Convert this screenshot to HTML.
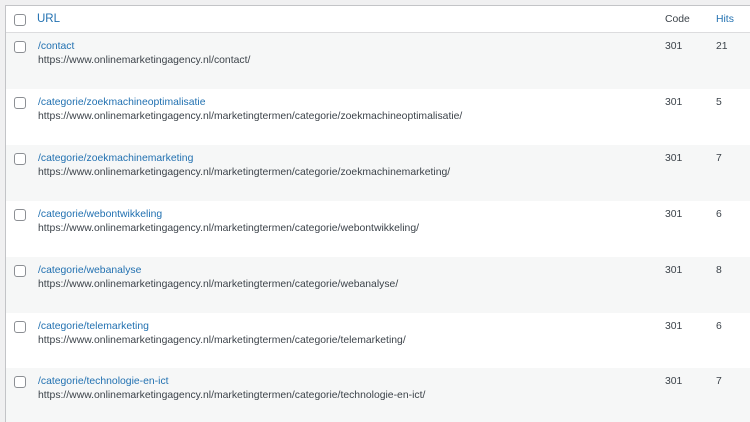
<!DOCTYPE html>
<html><head><style>
html,body{margin:0;width:750px;height:422px;overflow:hidden}
body{background:#f0f0f1;font-family:"Liberation Sans",Arial,sans-serif;font-size:10.4px;color:#3c434a;position:relative}
.t{position:absolute;left:5px;top:5px;width:760px;height:430px;background:#fff;border:1px solid #c3c4c7}
.h{position:absolute;left:0;top:0;right:0;height:26px;border-bottom:1px solid #dcdcde;background:#fff}
.r{position:absolute;left:0;right:0;height:56px}
.g{background:#f6f7f7}
.cb{position:absolute;left:8px;width:10px;height:10px;border:1px solid #8c8f94;border-radius:3px;background:#fff}
.a{color:#2271b1;position:absolute;left:31px}
.u{position:absolute;left:32px}
.c{position:absolute;left:659px}
.hi{position:absolute;left:710px}
</style></head><body>
<div class="t">
<div class="h"><div class="cb" style="top:8px"></div><span class="a" style="top:7px;font-size:11.5px">URL</span><span class="c" style="top:8px">Code</span><span class="hi" style="top:8px;color:#2271b1">Hits</span></div>
<div class="r g" style="top:27px"><div class="cb" style="top:8px"></div><span class="a" style="top:8px;left:32px">/contact</span><span class="u" style="top:22px">https://www.onlinemarketingagency.nl/contact/</span><span class="c" style="top:8px">301</span><span class="hi" style="top:8px">21</span></div>
<div class="r" style="top:83px"><div class="cb" style="top:8px"></div><span class="a" style="top:8px;left:32px">/categorie/zoekmachineoptimalisatie</span><span class="u" style="top:22px">https://www.onlinemarketingagency.nl/marketingtermen/categorie/zoekmachineoptimalisatie/</span><span class="c" style="top:8px">301</span><span class="hi" style="top:8px">5</span></div>
<div class="r g" style="top:139px"><div class="cb" style="top:8px"></div><span class="a" style="top:8px;left:32px">/categorie/zoekmachinemarketing</span><span class="u" style="top:22px">https://www.onlinemarketingagency.nl/marketingtermen/categorie/zoekmachinemarketing/</span><span class="c" style="top:8px">301</span><span class="hi" style="top:8px">7</span></div>
<div class="r" style="top:195px"><div class="cb" style="top:8px"></div><span class="a" style="top:8px;left:32px">/categorie/webontwikkeling</span><span class="u" style="top:22px">https://www.onlinemarketingagency.nl/marketingtermen/categorie/webontwikkeling/</span><span class="c" style="top:8px">301</span><span class="hi" style="top:8px">6</span></div>
<div class="r g" style="top:251px"><div class="cb" style="top:8px"></div><span class="a" style="top:8px;left:32px">/categorie/webanalyse</span><span class="u" style="top:22px">https://www.onlinemarketingagency.nl/marketingtermen/categorie/webanalyse/</span><span class="c" style="top:8px">301</span><span class="hi" style="top:8px">8</span></div>
<div class="r" style="top:307px"><div class="cb" style="top:8px"></div><span class="a" style="top:8px;left:32px">/categorie/telemarketing</span><span class="u" style="top:22px">https://www.onlinemarketingagency.nl/marketingtermen/categorie/telemarketing/</span><span class="c" style="top:8px">301</span><span class="hi" style="top:8px">6</span></div>
<div class="r g" style="top:362px"><div class="cb" style="top:8px"></div><span class="a" style="top:8px;left:32px">/categorie/technologie-en-ict</span><span class="u" style="top:22px">https://www.onlinemarketingagency.nl/marketingtermen/categorie/technologie-en-ict/</span><span class="c" style="top:8px">301</span><span class="hi" style="top:8px">7</span></div>
</div>
</body></html>
